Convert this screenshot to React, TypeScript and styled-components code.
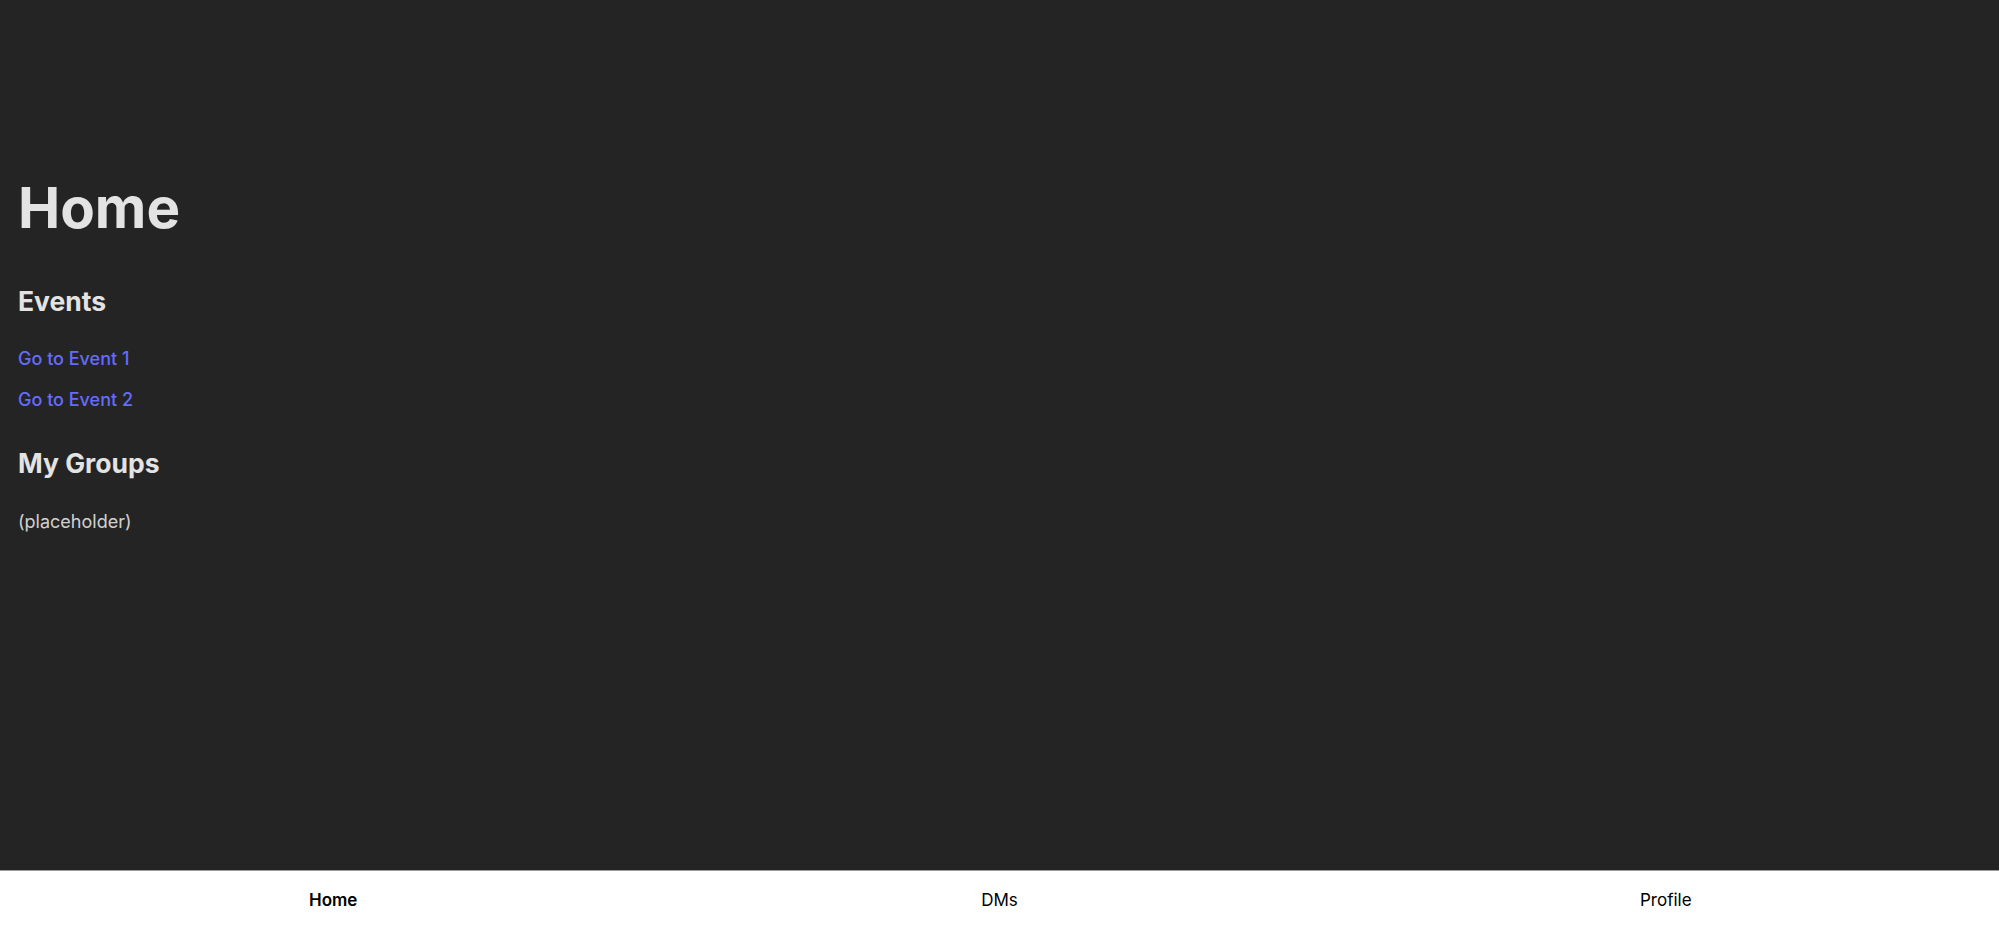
import React from 'react';
import styled, { createGlobalStyle } from 'styled-components';

const GlobalStyle = createGlobalStyle`
  html, body {
    margin: 0;
    padding: 0;
    background-color: #242424;
  }
  body {
    font-family: Inter, "Noto Sans", "Liberation Sans", sans-serif;
    -webkit-font-smoothing: antialiased;
  }
`;

const Shell = styled.div`
  display: flex;
  flex-direction: column;
  height: 100vh;
  background-color: #242424;
  color: rgba(255, 255, 255, 0.87);
`;

const Main = styled.main`
  flex: 1;
  display: flex;
  flex-direction: column;
  align-items: flex-start;
  padding: 177px 18px 0;
`;

const Title = styled.h1`
  margin: 0;
  font-size: 56.5px;
  line-height: 1.1;
  font-weight: 700;
  color: #e3e3e3;
`;

const Section = styled.h2<{ $gap: number }>`
  margin: ${(p) => p.$gap}px 0 0;
  font-size: 26.5px;
  line-height: 1.2;
  font-weight: 650;
  color: #e3e3e3;
`;

const EventLink = styled.a<{ $gap: number }>`
  display: block;
  margin-top: ${(p) => p.$gap}px;
  font-size: 18px;
  line-height: 1.5;
  font-weight: 450;
  color: #646cff;
  text-decoration: none;
  cursor: pointer;
`;

const Placeholder = styled.p`
  margin: 28.5px 0 0;
  font-size: 18px;
  line-height: 1.5;
  color: rgba(255, 255, 255, 0.8);
`;

const NavBar = styled.nav`
  flex: 0 0 66px;
  box-sizing: border-box;
  display: grid;
  grid-template-columns: repeat(3, 1fr);
  align-items: start;
  padding-top: 19px;
  background-color: #ffffff;
  border-top: 1px solid #9a9a9a;
`;

const NavItem = styled.a<{ $active?: boolean }>`
  justify-self: center;
  font-size: 17px;
  line-height: 1.2;
  font-weight: ${(p) => (p.$active ? 600 : 400)};
  color: #000000;
  text-decoration: none;
  cursor: pointer;
`;

const events = ['Go to Event 1', 'Go to Event 2'];
const tabs = ['Home', 'DMs', 'Profile'];

export default function App() {
  return (
    <>
      <GlobalStyle />
      <Shell>
        <Main>
          <Title>Home</Title>
          <Section $gap={47}>Events</Section>
          {events.map((label, i) => (
            <EventLink key={label} $gap={i === 0 ? 27 : 13.6}>
              {label}
            </EventLink>
          ))}
          <Section $gap={35}>My Groups</Section>
          <Placeholder>(placeholder)</Placeholder>
        </Main>
        <NavBar>
          {tabs.map((tab) => (
            <NavItem key={tab} $active={tab === 'Home'}>
              {tab}
            </NavItem>
          ))}
        </NavBar>
      </Shell>
    </>
  );
}
